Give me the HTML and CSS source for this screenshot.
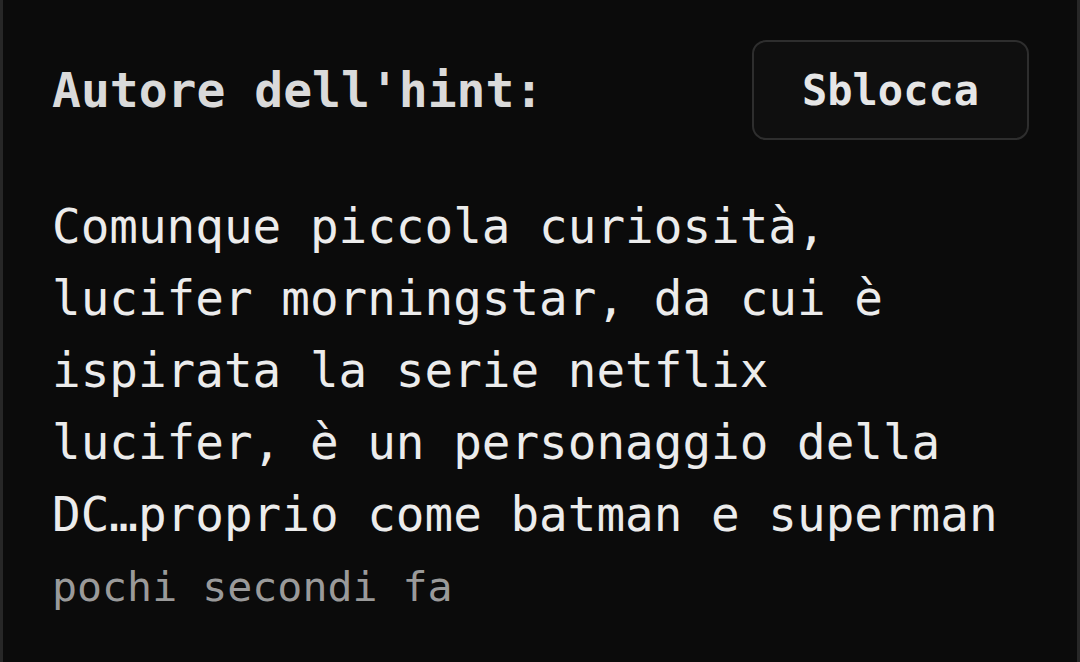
FILE: index.html
```html
<!DOCTYPE html>
<html lang="it">
<head>
<meta charset="utf-8">
<meta name="viewport" content="width=device-width, initial-scale=1.0">
<title>Hint</title>
<link rel="stylesheet" href="styles.css">
</head>
<body>

<div class="hint-card">
	<div class="hint-head">
		<div class="hint-author">Autore dell'hint:</div>
		<button class="unlock" type="button">Sblocca</button>
	</div>
	<p class="hint-text">Comunque piccola curiosità, lucifer morningstar, da cui è ispirata la serie netflix lucifer, è un personaggio della DC…proprio come batman e superman</p>
	<div class="hint-time">pochi secondi fa</div>
</div>

</body>
</html>
```

FILE: styles.css
```css
html, body {
	margin : 0 ;
	background : #0b0b0b ;
	}
body {
	font-family : "DejaVu Sans Mono", "Liberation Mono", monospace ;
	}
.hint-card {
	box-sizing : border-box ;
	min-height : 100vh ;
	border : 3px solid #272727 ;
	border-style : none solid ;
	padding : 40px 48px 0 49px ;
	}
.hint-head {
	display : flex ;
	justify-content : space-between ;
	align-items : center ;
	}
.hint-author {
	font-size : 48px ;
	font-weight : bold ;
	color : #dadada ;
	}
.unlock {
	box-sizing : border-box ;
	width : 277px ;
	height : 100px ;
	padding : 0 ;
	background : #0f0f0f ;
	border : 2px solid #2e2e2e ;
	border-radius : 14px ;
	font-family : inherit ;
	font-size : 42px ;
	font-weight : bold ;
	color : #e6e6e6 ;
	}
.hint-text {
	margin : 51px 0 0 0 ;
	max-width : 960px ;
	font-size : 47.6px ;
	line-height : 72px ;
	color : #ececec ;
	}
.hint-time {
	margin-top : 4px ;
	font-size : 41.6px ;
	line-height : 63px ;
	color : #9a9a9a ;
	}
```
